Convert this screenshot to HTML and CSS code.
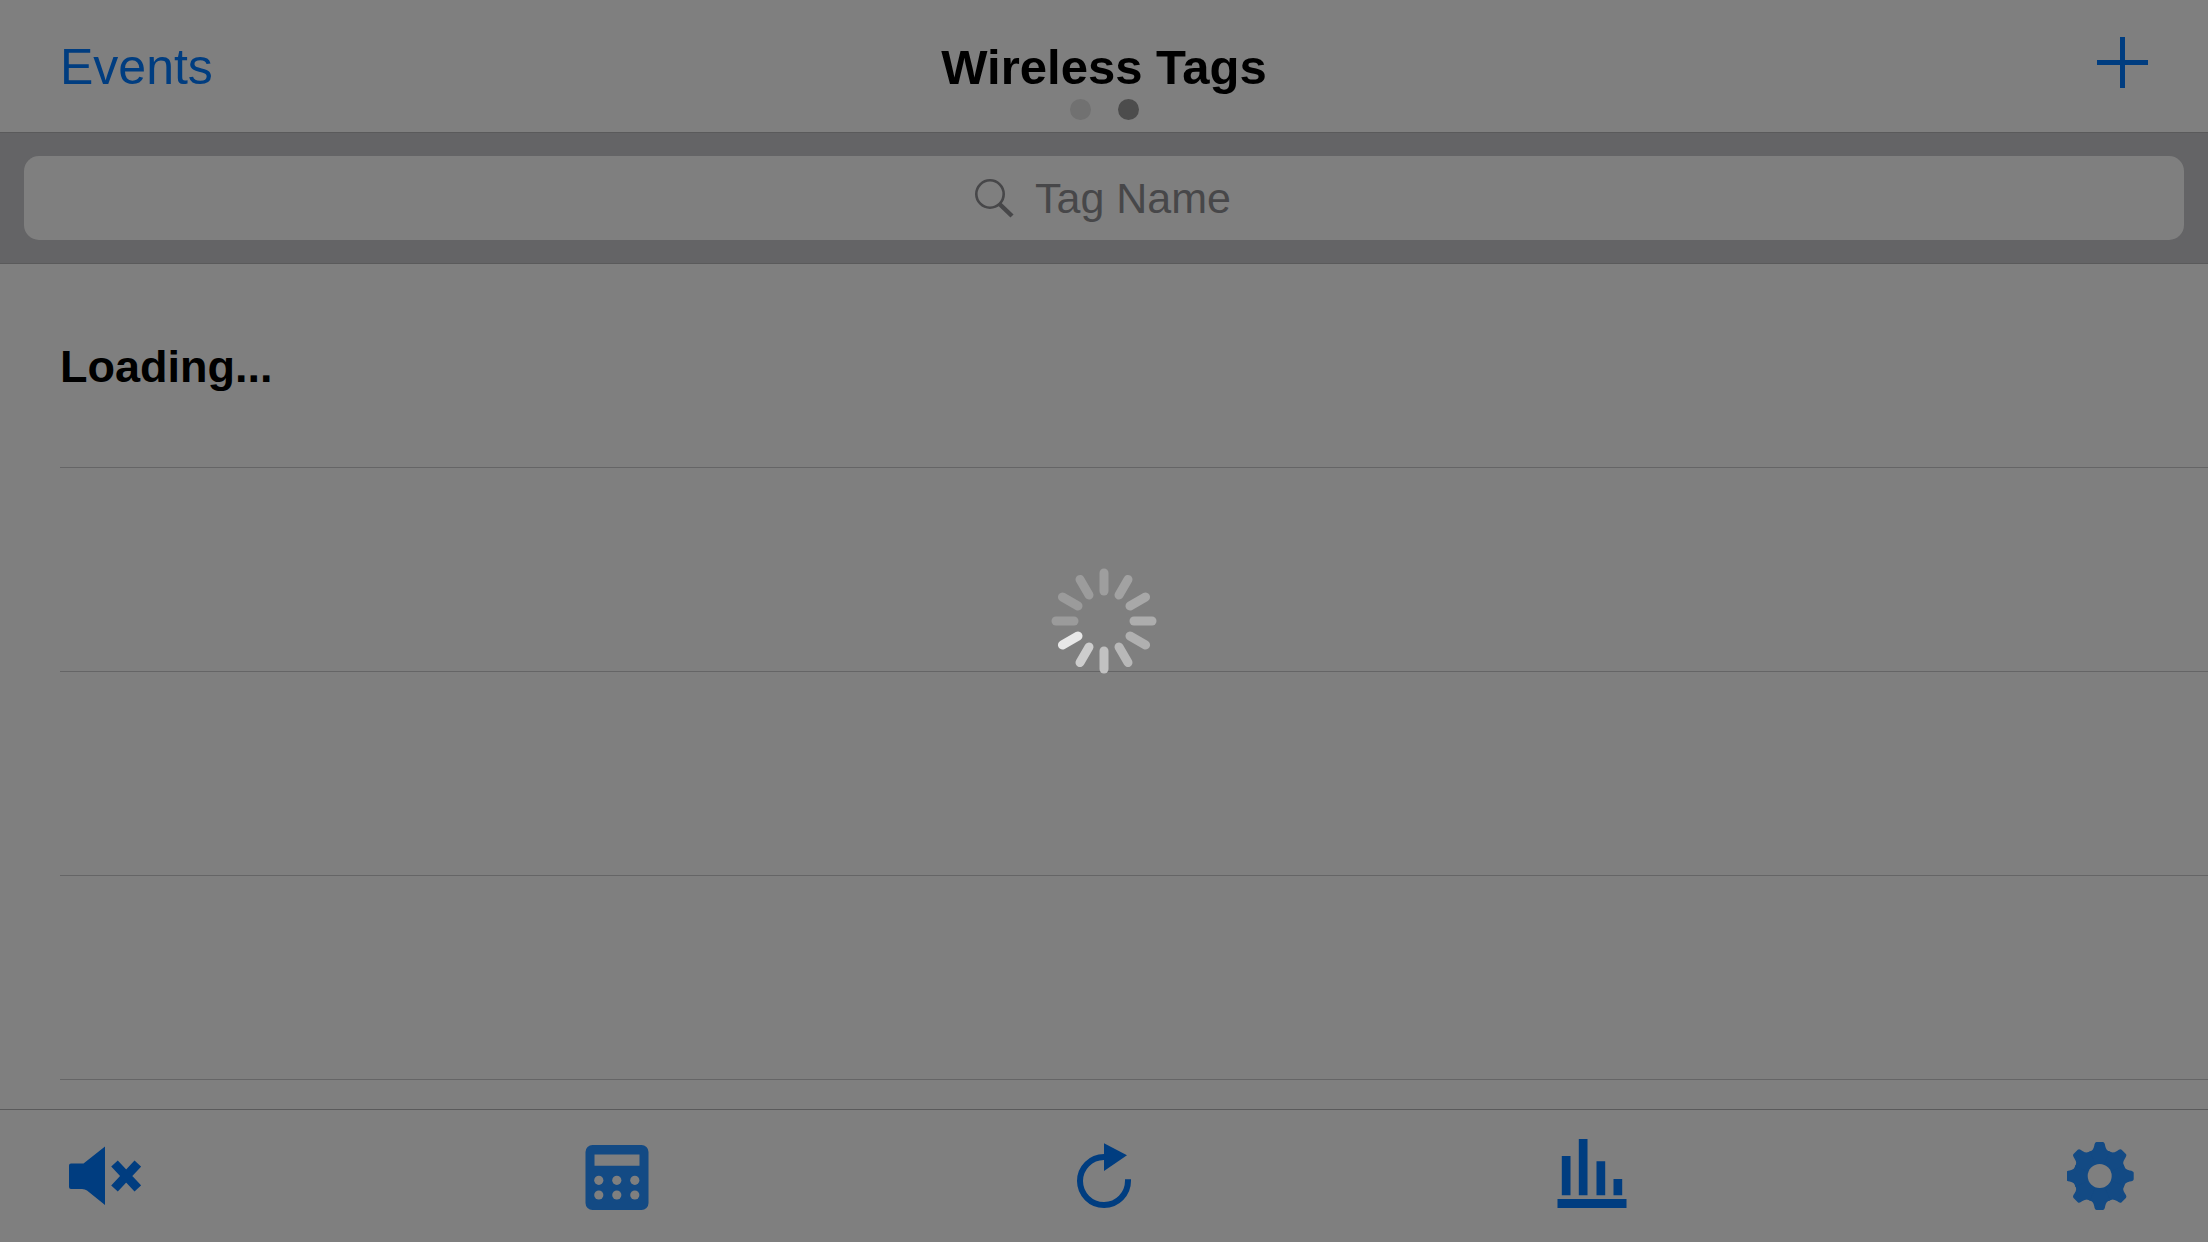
FILE: index.html
```html
<!DOCTYPE html>
<html lang="en">
<head>
<meta charset="utf-8">
<meta name="viewport" content="width=device-width, initial-scale=1">
<title>Wireless Tags</title>
<link rel="stylesheet" href="styles.css">
</head>
<body>
<header class="navbar">
  <a class="nav-link" href="#events">Events</a>
  <h1 class="nav-title">Wireless Tags</h1>
  <button class="nav-add" type="button" aria-label="Add tag">
    <svg width="51" height="51" viewBox="0 0 51 51"><path d="M23 0h5v23h23v5H28v23h-5V28H0v-5h23z"/></svg>
  </button>
  <div class="pager"><span class="dot"></span><span class="dot dot-current"></span></div>
</header>
<form class="searchbar" role="search">
  <label class="search-field">
    <svg class="search-icon" width="39" height="39" viewBox="0 0 39 39"><circle cx="15" cy="15" r="13.700" stroke-width="2.600"/><path d="M24.500 25 37 37" stroke-width="4.500"/></svg>
    <input class="search-input" type="text" placeholder="Tag Name" aria-label="Tag Name">
  </label>
</form>
<main class="content">
  <ul class="tag-list">
    <li class="tag-row">Loading...</li>
    <li class="tag-row"></li>
    <li class="tag-row"></li>
    <li class="tag-row"></li>
  </ul>
</main>
<footer class="toolbar">
  <button class="tool tool-end" type="button" aria-label="Mute">
    <svg width="72" height="76" viewBox="0 0 72 76"><path d="M2 25.500H14.500L36 8.500V67L18 52.500Q16 51 13 51H2Q0 51 0 49V27.500Q0 25.500 2 25.500z"/><path d="M45.500 25.500 68.800 50.500M68.800 25.500 45.500 50.500" stroke="currentColor" stroke-width="9"/></svg>
  </button>
  <button class="tool tool-soft" type="button" aria-label="Calculator">
    <svg width="72" height="76" viewBox="0 0 72 76"><path fill-rule="evenodd" d="M11.500 7h49a7 7 0 0 1 7 7v51a7 7 0 0 1-7 7h-49a7 7 0 0 1-7-7V14a7 7 0 0 1 7-7zM13.500 16.500v11.200h45V16.500z"/><g class="cutout"><circle cx="17.800" cy="42.300" r="4.600"/><circle cx="35.800" cy="42.300" r="4.600"/><circle cx="53.800" cy="42.300" r="4.600"/><circle cx="17.800" cy="57" r="4.600"/><circle cx="35.800" cy="57" r="4.600"/><circle cx="53.800" cy="57" r="4.600"/></g></svg>
  </button>
  <button class="tool" type="button" aria-label="Refresh">
    <svg width="72" height="76" viewBox="0 0 72 76"><path d="M60 41.300v1.500A24 24 0 1 1 36 19" fill="none" stroke="currentColor" stroke-width="6"/><path d="M36 5.300 59 17.300 36 33z"/></svg>
  </button>
  <button class="tool" type="button" aria-label="Statistics">
    <svg width="72" height="76" viewBox="0 0 72 76"><path d="M1.500 61h69v9h-69zM5.800 18h8.700v39.300H5.800zM22.800 1h8.700v56.300h-8.700zM40.500 23.300h8.700v34h-8.700zM57.500 41h8.700v16.300h-8.700z"/></svg>
  </button>
  <button class="tool tool-end tool-soft" type="button" aria-label="Settings">
    <svg width="72" height="76" viewBox="0 0 72 76">
      <defs><path id="tooth" d="M0 0-10.500-24Q-6.500-25-5.500-30-5-34-3-34H3Q5-34 5.500-30 6.500-25 10.500-24z"/></defs>
      <g transform="translate(32.700 38)"><circle r="26.500"/><use href="#tooth"/><use href="#tooth" transform="rotate(45)"/><use href="#tooth" transform="rotate(90)"/><use href="#tooth" transform="rotate(135)"/><use href="#tooth" transform="rotate(180)"/><use href="#tooth" transform="rotate(225)"/><use href="#tooth" transform="rotate(270)"/><use href="#tooth" transform="rotate(315)"/><circle class="cutout" r="12"/></g>
    </svg>
  </button>
</footer>
<div class="spinner" role="status" aria-label="Loading">
  <svg width="108" height="108" viewBox="-54 -54 108 108" stroke-width="9" stroke-linecap="round">
    <path d="M0-30V-48" stroke="#9e9e9e"/>
    <path d="M0-30V-48" stroke="#a2a2a2" transform="rotate(30)"/>
    <path d="M0-30V-48" stroke="#a8a8a8" transform="rotate(60)"/>
    <path d="M0-30V-48" stroke="#adadad" transform="rotate(90)"/>
    <path d="M0-30V-48" stroke="#b0b0b0" transform="rotate(120)"/>
    <path d="M0-30V-48" stroke="#b8b8b8" transform="rotate(150)"/>
    <path d="M0-30V-48" stroke="#c1c1c1" transform="rotate(180)"/>
    <path d="M0-30V-48" stroke="#cdcdcd" transform="rotate(210)"/>
    <path d="M0-30V-48" stroke="#e8e8e8" transform="rotate(240)"/>
    <path d="M0-30V-48" stroke="#9b9b9b" transform="rotate(270)"/>
    <path d="M0-30V-48" stroke="#9b9b9b" transform="rotate(300)"/>
    <path d="M0-30V-48" stroke="#9c9c9c" transform="rotate(330)"/>
  </svg>
</div>
</body>
</html>
```
FILE: styles.css
```css
:root {
  --surface: #7f7f7f;
  --tint: #003d80;
  --tint-soft: #134a84;
  --hairline: #5a5a5b;
}

* { box-sizing: border-box; }

body {
  margin: 0;
  min-height: 100vh;
  display: flex;
  flex-direction: column;
  position: relative;
  background: var(--surface);
  color: #000;
  font-family: "Liberation Sans", Arial, sans-serif;
}

button {
  border: 0;
  padding: 0;
  background: none;
  color: var(--tint);
}

svg { display: block; fill: currentColor; }

.navbar {
  position: relative;
  display: grid;
  grid-template-columns: 1fr auto 1fr;
  align-items: center;
  height: 132px;
  padding: 2px 60px 0;
}

.nav-link {
  justify-self: start;
  color: var(--tint);
  font-size: 50px;
  line-height: 60px;
  text-decoration: none;
}

.nav-title {
  margin: 0;
  font-size: 49px;
  line-height: 60px;
  font-weight: 700;
}

.nav-add { justify-self: end; padding-bottom: 9px; }

.pager {
  position: absolute;
  bottom: 12px;
  left: 0;
  right: 0;
  display: flex;
  justify-content: center;
  gap: 27px;
}

.dot {
  width: 21px;
  height: 21px;
  border-radius: 50%;
  background: #717171;
}

.dot-current { background: #4c4c4c; }

.searchbar {
  padding: 23px 24px;
  background: #646466;
  border: solid var(--hairline);
  border-width: 1px 0;
}

.search-field {
  display: flex;
  align-items: center;
  justify-content: center;
  gap: 21px;
  height: 84px;
  border-radius: 15px;
  background: var(--surface);
  color: #474749;
}

.search-icon { fill: none; stroke: currentColor; }

.search-input {
  width: 198px;
  padding: 0;
  border: 0;
  outline: 0;
  background: none;
  color: #000;
  font: 43px/48px "Liberation Sans", Arial, sans-serif;
}

.search-input::placeholder { color: #474749; opacity: 1; }

.content { flex: 1; }

.tag-list {
  margin: 0;
  padding: 0 0 0 60px;
  list-style: none;
}

.tag-row {
  display: flex;
  align-items: center;
  height: 204px;
  padding-top: 2px;
  border-bottom: 1px solid #656566;
  font-size: 45px;
  line-height: 60px;
  font-weight: 700;
}

.toolbar {
  display: flex;
  align-items: center;
  justify-content: space-between;
  height: 133px;
  padding: 0 45px;
  border-top: 1px solid var(--hairline);
}

.tool {
  display: flex;
  justify-content: center;
  width: 72px;
}

.tool-end { width: 120px; }
.tool-soft { color: var(--tint-soft); }
.cutout { fill: var(--surface); }

.spinner {
  position: absolute;
  inset: 0;
  display: flex;
  align-items: center;
  justify-content: center;
  pointer-events: none;
}
```
